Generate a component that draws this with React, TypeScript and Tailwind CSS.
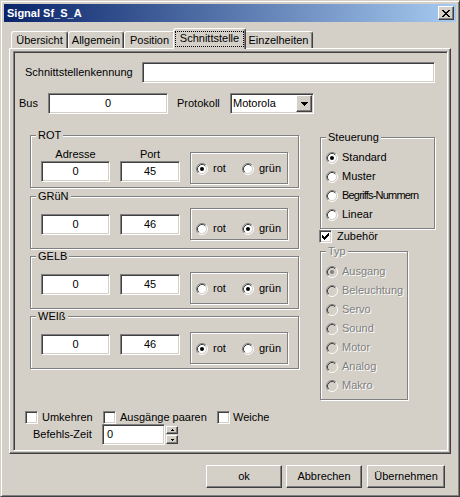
import React from "react";

const sunken =
  "bg-white border border-t-[#808080] border-l-[#808080] border-b-white border-r-white shadow-[inset_1px_1px_0_#404040,inset_-1px_-1px_0_#d4d0c8]";
const raised =
  "bg-[#d4d0c8] border border-t-white border-l-white border-b-[#404040] border-r-[#404040] shadow-[inset_-1px_-1px_0_#808080]";
const etched = "border border-[#808080] shadow-[inset_1px_1px_0_#fff,1px_1px_0_#fff]";
const disabledText = "text-[#808080] [text-shadow:1px_1px_0_#fff]";

function Pix({ rows, color = "#000" }: { rows: string[]; color?: string }) {
  const w = rows[0].length;
  const h = rows.length;
  return (
    <svg width={w} height={h} viewBox={`0 0 ${w} ${h}`} shapeRendering="crispEdges" className="block shrink-0">
      {rows.flatMap((r, y) =>
        r.split("").map((c, x) =>
          c === "X" ? <rect key={`${x}-${y}`} x={x} y={y} width="1" height="1" fill={color} /> : null
        )
      )}
    </svg>
  );
}

const closeRows = ["XX    XX", " XX  XX ", "  XXXX  ", "   XX   ", "  XXXX  ", " XX  XX ", "XX    XX"];
const checkRows = ["      X", "     XX", "X   XXX", "XX XXX ", "XXXXX  ", " XXX   ", "  X    "];

function Radio({ checked, disabled }: { checked?: boolean; disabled?: boolean }) {
  return (
    <svg width="12" height="12" viewBox="0 0 12 12" className="block shrink-0">
      <circle cx="6" cy="6" r="4.5" fill={disabled ? "#d4d0c8" : "#fff"} />
      <path d="M2.11 9.89 A5.5 5.5 0 0 1 9.89 2.11" fill="none" stroke="#808080" />
      <path d="M9.89 2.11 A5.5 5.5 0 0 1 2.11 9.89" fill="none" stroke="#ffffff" />
      <path d="M2.82 9.18 A4.5 4.5 0 0 1 9.18 2.82" fill="none" stroke="#404040" />
      <path d="M9.18 2.82 A4.5 4.5 0 0 1 2.82 9.18" fill="none" stroke="#d4d0c8" />
      {checked && <circle cx="6" cy="6" r="2" fill={disabled ? "#808080" : "#000"} />}
    </svg>
  );
}

function Check({ checked }: { checked?: boolean }) {
  return (
    <div className={`w-[13px] h-[13px] shrink-0 ${sunken} flex items-center justify-center`}>
      {checked && <Pix rows={checkRows} />}
    </div>
  );
}

function GroupLabel({ children, disabled }: { children: React.ReactNode; disabled?: boolean }) {
  return (
    <span
      className={`absolute left-[5px] top-[-7px] px-[2px] bg-[#d4d0c8] leading-[13px] ${disabled ? disabledText : ""}`}
    >
      {children}
    </span>
  );
}

function Field({ className, value, left }: { className: string; value: string; left?: boolean }) {
  return (
    <div className={`h-[21px] ${sunken} flex items-center ${left ? "pl-[4px]" : "justify-center"} ${className}`}>
      {value}
    </div>
  );
}

function RadioPanel({ className, rot }: { className: string; rot: boolean }) {
  return (
    <div className={`ml-[10px] w-[98px] h-[32px] ${etched} flex items-start pl-[5px] ${className}`}>
      <div className="w-[46px] h-[13px] flex items-center gap-[5px]">
        <Radio checked={rot} />
        <span>rot</span>
      </div>
      <div className="h-[13px] flex items-center gap-[5px]">
        <Radio checked={!rot} />
        <span>grün</span>
      </div>
    </div>
  );
}

function SignalGroup({
  title,
  port,
  rot,
  className,
  panelClass,
  header,
}: {
  title: string;
  port: string;
  rot: boolean;
  className: string;
  panelClass: string;
  header?: boolean;
}) {
  return (
    <div className={`relative h-[53px] ${etched} ${className}`}>
      <GroupLabel>{title}</GroupLabel>
      <div className="flex items-start pl-[10px]">
        {header ? (
          <>
            <div className="mt-[12px] w-[69px]">
              <div className="h-[13px] text-center">Adresse</div>
              <Field className="w-[69px]" value="0" />
            </div>
            <div className="mt-[12px] ml-[10px] w-[60px]">
              <div className="h-[13px] text-center">Port</div>
              <Field className="w-[60px]" value={port} />
            </div>
          </>
        ) : (
          <>
            <Field className="mt-[17px] w-[69px]" value="0" />
            <Field className="mt-[17px] ml-[10px] w-[60px]" value={port} />
          </>
        )}
        <RadioPanel className={panelClass} rot={rot} />
      </div>
    </div>
  );
}

function TabItem({ label, w }: { label: string; w: string }) {
  return (
    <div
      className={`h-[17px] ${w} border border-b-0 border-t-white border-l-white border-r-[#404040] shadow-[inset_-1px_0_0_#808080] rounded-t-[3px] flex items-center justify-center`}
    >
      {label}
    </div>
  );
}

function Button({ label, className }: { label: string; className: string }) {
  return <div className={`h-[23px] ${raised} flex items-center justify-center ${className}`}>{label}</div>;
}

export default function App() {
  const typ = ["Ausgang", "Beleuchtung", "Servo", "Sound", "Motor", "Analog", "Makro"];
  const steuerung = ["Standard", "Muster", "Begriffs-Nummern", "Linear"];
  return (
    <div className="w-[460px] h-[497px] overflow-hidden select-none bg-[#d4d0c8] border border-t-[#d4d0c8] border-l-[#d4d0c8] border-r-[#404040] border-b-[#404040] shadow-[inset_1px_1px_0_#fff,inset_-1px_-1px_0_#808080] p-[3px] font-['Liberation_Sans',Arial,sans-serif] text-[11px] leading-[13px] text-black">
      {/* Title bar */}
      <div className="h-[18px] flex items-center bg-[linear-gradient(to_right,#0a246a,#a6caf0)]">
        <span className="ml-[3px] text-white font-bold text-[11px]">Signal Sf_S_A</span>
        <div className={`ml-auto mr-[2px] w-[16px] h-[14px] ${raised} flex items-center justify-center pr-[1px]`}>
          <Pix rows={closeRows} />
        </div>
      </div>

      {/* Tabs */}
      <div className="relative z-10 mt-[6px] ml-[7px] h-[20px] flex items-end">
        <TabItem label="Übersicht" w="w-[57px]" />
        <TabItem label="Allgemein" w="w-[56px]" />
        <TabItem label="Position" w="w-[51px]" />
        <div className="relative z-10 -mx-[2px] mb-[-1px] h-[21px] w-[73px] border border-b-0 border-t-white border-l-white border-r-[#404040] shadow-[inset_-1px_0_0_#808080] rounded-t-[3px] bg-[#d4d0c8] flex justify-center pt-[2px]">
          <span className="w-[69px] h-[16px] border border-dotted border-black flex items-center justify-center pb-[1px]">
            Schnittstelle
          </span>
        </div>
        <TabItem label="Einzelheiten" w="w-[69px]" />
      </div>

      {/* Tab panel */}
      <div className="ml-[5px] w-[442px] h-[406px] border border-t-white border-l-white border-r-[#404040] border-b-[#404040] shadow-[inset_-1px_-1px_0_#808080] pt-[2px] pl-[3px] pr-[2px] pb-[2px]">
        <div className="w-[435px] h-[400px] border border-t-[#808080] border-l-[#808080] border-b-white border-r-white shadow-[inset_1px_1px_0_#404040]">
          {/* Row 1 */}
          <div className="mt-[10px] flex items-center">
            <span className="ml-[11px] w-[117px]">Schnittstellenkennung</span>
            <Field className="w-[293px]" value="" />
          </div>
          {/* Row 2 */}
          <div className="mt-[10px] flex items-center">
            <span className="ml-[5px] w-[29px]">Bus</span>
            <Field className="w-[120px]" value="0" />
            <span className="ml-[9px] w-[53px]">Protokoll</span>
            <div className={`w-[84px] h-[21px] ${sunken} flex items-center`}>
              <span className="ml-[2px] flex-1">Motorola</span>
              <div className={`mr-[1px] w-[16px] h-[17px] ${raised} flex items-center justify-center`}>
                <Pix rows={["XXXXXXX", " XXXXX ", "  XXX  ", "   X   "]} />
              </div>
            </div>
          </div>

          {/* Main */}
          <div className="mt-[21px] flex items-start">
            <div className="ml-[16px] w-[269px]">
              <SignalGroup title="ROT" port="45" rot header className="" panelClass="mt-[16px] pt-[9px]" />
              <SignalGroup title="GRüN" port="46" rot={false} className="mt-[8px]" panelClass="mt-[11px] pt-[13px]" />
              <SignalGroup title="GELB" port="45" rot={false} className="mt-[7px]" panelClass="mt-[15px] pt-[9px]" />
              <SignalGroup title="WEIß" port="46" rot className="mt-[7px]" panelClass="mt-[15px] pt-[9px]" />
            </div>

            <div className="ml-[21px] mt-[2px] w-[115px]">
              <div className={`relative h-[92px] ${etched} pt-[10px] pl-[5px]`}>
                <GroupLabel>Steuerung</GroupLabel>
                {steuerung.map((s, i) => (
                  <div key={s} className="h-[19px] flex items-center gap-[4px]">
                    <Radio checked={i === 0} />
                    <span className={i === 2 ? "tracking-[-0.8px] whitespace-nowrap" : ""}>{s}</span>
                  </div>
                ))}
              </div>
              <div className="mt-[1px] ml-[-1px] h-[13px] flex items-center gap-[5px]">
                <Check checked />
                <span>Zubehör</span>
              </div>
              <div className={`relative mt-[8px] w-[88px] h-[149px] ${etched} pt-[10px] pl-[5px]`}>
                <GroupLabel disabled>Typ</GroupLabel>
                {typ.map((t, i) => (
                  <div key={t} className="h-[19px] flex items-center gap-[4px]">
                    <Radio checked={i === 0} disabled />
                    <span className={disabledText}>{t}</span>
                  </div>
                ))}
              </div>
            </div>
          </div>

          {/* Bottom checkboxes */}
          <div className="mt-[11px] h-[13px] flex items-center">
            <div className="ml-[11px] w-[78px] flex items-center gap-[4px]">
              <Check />
              <span>Umkehren</span>
            </div>
            <div className="w-[114px] flex items-center gap-[4px]">
              <Check />
              <span className="whitespace-nowrap">Ausgänge paaren</span>
            </div>
            <div className="flex items-center gap-[3px]">
              <Check />
              <span>Weiche</span>
            </div>
          </div>

          {/* Befehls-Zeit */}
          <div className="h-[21px] flex items-start">
            <span className="ml-[19px] w-[69px] h-[21px] flex items-center">Befehls-Zeit</span>
            <Field className="w-[63px]" value="0" left />
            <div className="ml-[1px] w-[12px]">
              <div className={`mt-[2px] h-[8px] ${raised} flex items-center justify-center`}>
                <Pix rows={[" X ", "XXX"]} />
              </div>
              <div className={`mt-[1px] h-[9px] ${raised} flex items-center justify-center`}>
                <Pix rows={["XXX", " X "]} />
              </div>
            </div>
          </div>
        </div>
      </div>

      {/* Buttons */}
      <div className="mt-[11px] flex">
        <Button label="ok" className="ml-[202px] w-[76px]" />
        <Button label="Abbrechen" className="ml-[4px] w-[76px]" />
        <Button label="Übernehmen" className="ml-[5px] w-[78px]" />
      </div>
    </div>
  );
}
